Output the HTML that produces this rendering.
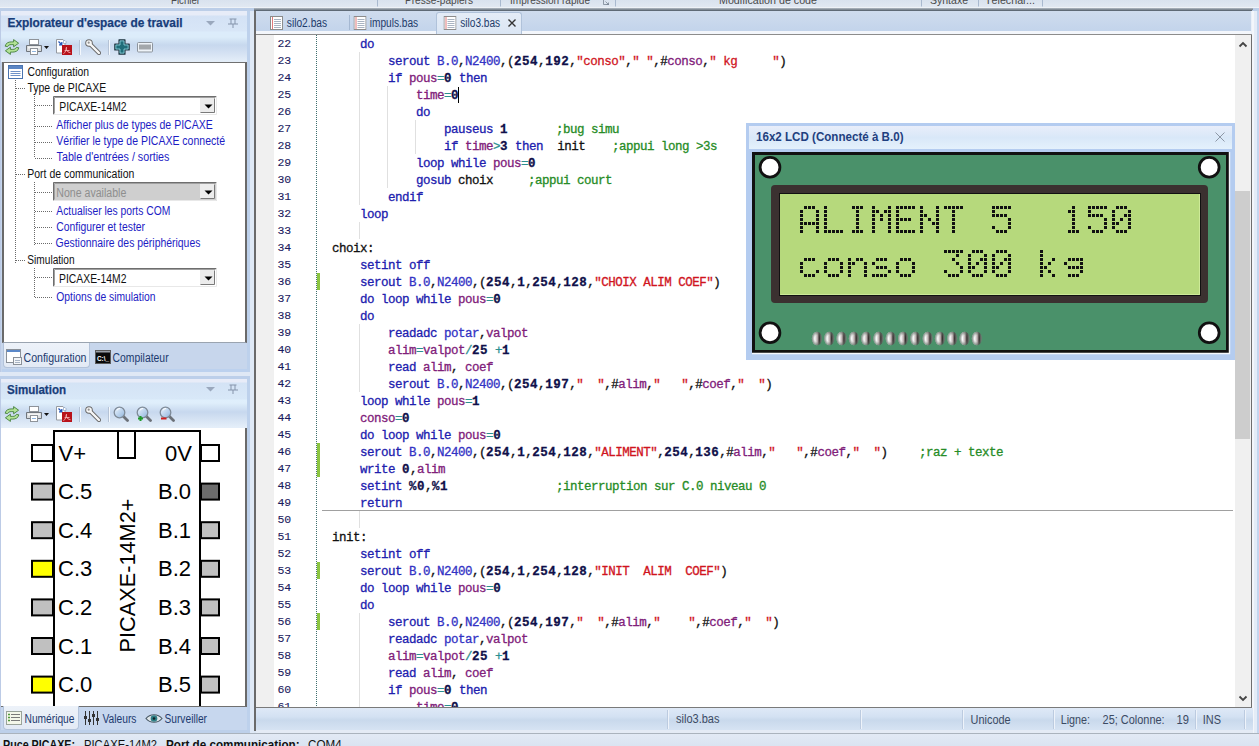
<!DOCTYPE html>
<html><head><meta charset="utf-8">
<style>
html,body{margin:0;padding:0;}
body{width:1259px;height:746px;overflow:hidden;position:relative;background:#dbe6f4;font-family:"Liberation Sans",sans-serif;}
.a{position:absolute;}
#code{position:absolute;left:256px;top:35px;width:979px;height:672px;overflow:hidden;background:#fff;}
.ln{position:absolute;left:0;width:35px;text-align:right;height:17px;line-height:17px;margin-top:-2px;font-family:"Liberation Mono",monospace;font-size:11.5px;letter-spacing:-0.2px;color:#1b1b5e;-webkit-text-stroke:0.1px currentColor;}
.cl{position:absolute;height:17px;line-height:17px;white-space:pre;font-family:"Liberation Mono",monospace;font-size:12.5px;letter-spacing:-0.5px;color:#111;-webkit-text-stroke:0.3px currentColor;}
.cl span{white-space:pre;}
.k{color:#2020ae;}
.p{color:#3333c4;}
.v{color:#80207a;}
.n{color:#10104a;font-weight:bold;letter-spacing:0.5px;}
.s{color:#d0141e;}
.c{color:#268c26;position:absolute;top:0;}
.l{color:#111;}
.o{color:#2a9090;}
svg text{font-family:"Liberation Sans",sans-serif;}
</style></head><body>
<!-- ribbon strip -->
<div class="a" style="left:0;top:0;width:1259px;height:8px;background:linear-gradient(#d9e2ee,#e2e9f2);"></div>
<div class="a" style="left:0;top:7px;width:1259px;height:1px;background:#eef2f7;"></div>
<div class="a" style="left:0;top:8px;width:1259px;height:3px;background:#bcceE8;"></div>
<div class="a" style="left:254px;top:8px;width:999px;height:2px;background:linear-gradient(#b4bcc6,#737d88);"></div>

<svg class="a" style="left:0;top:0" width="1259" height="746" viewBox="0 0 1259 746">
  <g font-size="11" fill="#4a4a4a">
    <text x="171" y="3.7" textLength="29" lengthAdjust="spacingAndGlyphs">Fichier</text>
    <text x="405" y="3.7" textLength="68" lengthAdjust="spacingAndGlyphs">Presse-papiers</text>
    <text x="510" y="3.7" textLength="80" lengthAdjust="spacingAndGlyphs">Impression rapide</text>
    <text x="719" y="3.7" textLength="98" lengthAdjust="spacingAndGlyphs">Modification de code</text>
    <text x="930" y="3.7" textLength="38" lengthAdjust="spacingAndGlyphs">Syntaxe</text>
    <text x="985" y="3.7" textLength="50" lengthAdjust="spacingAndGlyphs">Téléchar...</text>
  </g>
  <path id="launcher" d="M603.5 0V4.5H609M605.5 1.5l3 3M608.5 2.5v2h-2" stroke="#7a8594" stroke-width=".8" fill="none"/>
  <g stroke="#a9b9cf" stroke-width="1">
    <path d="M377.5 0V6.5M500.5 0V6.5M615.5 0V6.5M921.5 0V6.5M978.5 0V6.5M1042.5 0V6.5"/>
  </g>
</svg>

<!-- right frame strip -->
<div class="a" style="left:1252px;top:11px;width:2px;height:722px;background:#f3f6fb;"></div>
<div class="a" style="left:1254px;top:11px;width:3px;height:722px;background:#e4ecf7;"></div>
<div class="a" style="left:1257px;top:11px;width:2px;height:722px;background:#c3d5ef;"></div>
<!-- LEFT PANEL 1 -->
<div class="a" style="left:0;top:11px;width:250px;height:365px;background:#c6d6ed;"></div>
<div class="a" style="left:0;top:11px;width:1px;height:722px;background:#bccbe6;"></div>
<div class="a" style="left:247px;top:11px;width:3px;height:722px;background:#bdd1ec;"></div>
<div class="a" style="left:250px;top:11px;width:4px;height:722px;background:#dfe9f6;"></div>
<div class="a" style="left:1px;top:11px;width:246px;height:51px;background:linear-gradient(#e7ecf8 0px,#e7ecf8 4px,#d4e2f5 5px,#d8e6f7 20px,#dcecfb 21px,#dcecfa 26px,#c7d8ee 34px,#cddcf0 38px,#e3edf8 50px);"></div>
<div class="a" style="left:2px;top:62px;width:245px;height:281px;box-sizing:border-box;background:#fff;border:1px solid #707070;border-left:2px solid #6a6a6a;border-right:2px solid #6a6a6a;border-bottom:1px solid #9aa4b0;"></div>
<div class="a" style="left:1px;top:343px;width:246px;height:26px;background:#c7d6ec;"></div>
<div class="a" style="left:2px;top:369px;width:245px;height:3px;background:#bcd1ee;"></div>
<div class="a" style="left:0px;top:372px;width:250px;height:4px;background:#dfe8f5;"></div>
<div class="a" style="left:3px;top:343px;width:87px;height:25px;box-sizing:border-box;background:linear-gradient(#edf2f9,#e3eaf5);border:1px solid #b3c3da;border-top:none;border-radius:0 0 4px 4px;"></div>

<!-- LEFT PANEL 2 (simulation) -->
<div class="a" style="left:0;top:376px;width:250px;height:3px;background:#bccfea;"></div>
<div class="a" style="left:0;top:379px;width:1px;height:354px;background:#bccbe6;"></div>
<div class="a" style="left:1px;top:379px;width:246px;height:49px;background:linear-gradient(#e8ecf8 0px,#e8ecf8 3px,#d4e3f5 4px,#d8e8f8 20px,#dfeffc 21px,#dfeefb 24px,#c7d8ee 33px,#cddcf0 36px,#e4eef9 48px);"></div>
<div class="a" style="left:1px;top:428px;width:246px;height:279px;box-sizing:border-box;background:#fff;border-right:2px solid #6a6a6a;border-bottom:1px solid #707070;"></div>
<div class="a" style="left:1px;top:707px;width:246px;height:23px;background:#c7d7ee;"></div>
<div class="a" style="left:0;top:730px;width:250px;height:3px;background:#bdd0ea;"></div>
<div class="a" style="left:3px;top:706px;width:76px;height:24px;box-sizing:border-box;background:linear-gradient(#edf2f9,#e3eaf5);border:1px solid #b3c3da;border-top:none;border-radius:0 0 4px 4px;"></div>

<svg class="a" style="left:0;top:0" width="260" height="746" viewBox="0 0 260 746">
  <defs>
    <linearGradient id="gGreen" x1="0" y1="0" x2="0" y2="1"><stop offset="0" stop-color="#a6dc8a"/><stop offset="1" stop-color="#4fa53c"/></linearGradient>
    <linearGradient id="gMag" x1="0" y1="0" x2="1" y2="1"><stop offset="0" stop-color="#eef6ff"/><stop offset="1" stop-color="#8fb4dc"/></linearGradient>
    <symbol id="icRefresh" viewBox="0 0 16 16">
      <path d="M1.2 7.2C1.6 4.3 4.3 2.9 7.2 2.9H9.6V.6l5 3.6-5 3.6V5.6H7.2C5.5 5.6 4.2 6.2 3.6 7.6z" fill="#b3e396" stroke="#44803a" stroke-width=".9" stroke-linejoin="round"/>
      <path d="M14.8 8.8c-.4 2.9-3.1 4.3-6 4.3H6.4v2.3l-5-3.6 5-3.6v2.2h2.4c1.7 0 3-.6 3.6-2z" fill="#b3e396" stroke="#44803a" stroke-width=".9" stroke-linejoin="round"/>
    </symbol>
    <symbol id="icPrint" viewBox="0 0 16 16">
      <rect x="3.5" y=".5" width="9" height="5" fill="#fff" stroke="#8e9399"/>
      <path d="M.5 6.5h15v6h-15z" fill="#d9dcdf" stroke="#6f757c"/>
      <rect x="2" y="7.5" width="12" height="2" fill="#f4f4f4"/>
      <rect x="4.5" y="9.5" width="7" height="6" fill="#fff" stroke="#8e9399"/>
      <path d="M6 12.5h4" stroke="#8fb6e0"/>
    </symbol>
    <symbol id="icPdf" viewBox="0 0 16 16">
      <path d="M.5 .5h6.5l2 2v11.5H.5z" fill="#fff" stroke="#959aa1"/>
      <path d="M2.5 2.5l3 3M5.8 3v2.8H3" stroke="#2456b8" stroke-width="1.3" fill="none"/>
      <path d="M7.5 1.5h1.5l1 1v2h-2.5z" fill="#fff" stroke="#8aa0c0" stroke-width=".7"/>
      <rect x="6" y="6" width="10" height="10" fill="#b8121a"/>
      <path d="M7.5 14.8c1.8-1.6 3.2-4.2 3-6.6-.9 1.6-.2 4.8 4 5.5M8.6 11.5h5" stroke="#f3b0b0" stroke-width=".9" fill="none"/>
    </symbol>
    <symbol id="icWrench" viewBox="0 0 16 16">
      <path d="M4 4L14 14" stroke="#6a6a6a" stroke-width="4.2" stroke-linecap="round"/>
      <circle cx="4" cy="4" r="3.8" fill="#6a6a6a"/>
      <path d="M4 4L14 14" stroke="#f7f7f7" stroke-width="2.4" stroke-linecap="round"/>
      <circle cx="4" cy="4" r="2.8" fill="#f7f7f7"/>
      <circle cx="3.7" cy="3.7" r="1.1" fill="#909090"/>
    </symbol>
    <symbol id="icPlus" viewBox="0 0 16 16">
      <path d="M5 .8h6v4.2h4.2v6H11v4.2H5V11H.8V5H5z" fill="#1f6d79" stroke="#2a3c48" stroke-width="1.2" stroke-linejoin="round"/>
      <path d="M6 1.9h4v4.1h4.1v4H10v4.1H6V10H1.9V6H6z" fill="none" stroke="#9fe3ee" stroke-width=".7"/>
    </symbol>
    <symbol id="icMinus" viewBox="0 0 16 16">
      <rect x=".5" y="3.5" width="15" height="9.5" rx="1" fill="#eef3f8" stroke="#8d949c"/>
      <rect x="2" y="5.5" width="12" height="5" fill="#a3a7ab"/>
    </symbol>
    <symbol id="icMag" viewBox="0 0 16 16">
      <path d="M10 10l4.5 4.5" stroke="#6c7178" stroke-width="2.8" stroke-linecap="round"/>
      <circle cx="6.5" cy="6.5" r="5.3" fill="url(#gMag)" stroke="#7f8b98" stroke-width="1.3"/>
      <path d="M4 4.5a3 3 0 0 1 3-2" stroke="#fff" stroke-width="1" fill="none"/>
    </symbol>
  </defs>

  <!-- panel 1 header -->
  <text x="7.5" y="26.8" font-size="12" font-weight="bold" fill="#183d7a" stroke="#183d7a" stroke-width=".25" textLength="175" lengthAdjust="spacingAndGlyphs">Explorateur d'espace de travail</text>
  <path d="M206 21h9l-4.5 4.5z" fill="#9aa8bd"/>
  <path d="M229.5 19h7M231 19v5M235 19v5M228 24h10M233 24v4" stroke="#8594ab" stroke-width="1" fill="none"/>

  <!-- toolbar 1 -->
  <use href="#icRefresh" x="4" y="39" width="16" height="16"/>
  <use href="#icPrint" x="26" y="39" width="16" height="16"/>
  <path d="M44 46h5l-2.5 3z" fill="#111"/>
  <use href="#icPdf" x="56" y="39" width="16" height="16"/>
  <path d="M79.5 40v15" stroke="#b5c3d6"/><path d="M80.5 40v15" stroke="#f4f8fd"/>
  <use href="#icWrench" x="85" y="39" width="16" height="16"/>
  <path d="M108.5 40v15" stroke="#b5c3d6"/><path d="M109.5 40v15" stroke="#f4f8fd"/>
  <use href="#icPlus" x="114" y="39" width="16" height="16"/>
  <use href="#icMinus" x="137" y="39" width="16" height="16"/>

  <!-- tree -->
  <g fill="none" stroke="#6a6a6a" stroke-width="1" stroke-dasharray="1 1">
    <path d="M15.5 80V264M16 88.5H25M16 174.5H25M16 260.5H25"/>
    <path d="M34.5 96V158M35 105.5H52M35 126.5H53M35 142.5H53M35 158.5H53"/>
    <path d="M34.5 182V246M35 192.5H52M35 211.5H53M35 227.5H53M35 243.5H53"/>
    <path d="M34.5 268V297M35 277.5H52M35 297.5H53"/>
  </g>
  <!-- config icon -->
  <rect x="8.5" y="65.5" width="14" height="13" fill="#fff" stroke="#4a74b0"/>
  <rect x="9" y="66" width="13" height="3" fill="#5b86c4"/>
  <path d="M10.5 71.5h10M10.5 73.5h10M10.5 75.5h10" stroke="#6f92c8"/>

  <g font-size="12" fill="#111">
    <text x="27.4" y="76" textLength="61.7" lengthAdjust="spacingAndGlyphs">Configuration</text>
    <text x="27.4" y="91.5" textLength="79" lengthAdjust="spacingAndGlyphs">Type de PICAXE</text>
    <text x="27.3" y="177.8" textLength="107" lengthAdjust="spacingAndGlyphs">Port de communication</text>
    <text x="27.3" y="263.7" textLength="47.3" lengthAdjust="spacingAndGlyphs">Simulation</text>
  </g>
  <g font-size="12" fill="#1c1cc4">
    <text x="56.3" y="128.7" textLength="156.4" lengthAdjust="spacingAndGlyphs">Afficher plus de types de PICAXE</text>
    <text x="56.3" y="144.8" textLength="168.7" lengthAdjust="spacingAndGlyphs">Vérifier le type de PICAXE connecté</text>
    <text x="56.6" y="160.6" textLength="112.8" lengthAdjust="spacingAndGlyphs">Table d'entrées / sorties</text>
    <text x="56.3" y="215" textLength="114" lengthAdjust="spacingAndGlyphs">Actualiser les ports COM</text>
    <text x="56.3" y="230.5" textLength="88.7" lengthAdjust="spacingAndGlyphs">Configurer et tester</text>
    <text x="55.6" y="246.6" textLength="144.8" lengthAdjust="spacingAndGlyphs">Gestionnaire des périphériques</text>
    <text x="56.3" y="300.9" textLength="99.1" lengthAdjust="spacingAndGlyphs">Options de simulation</text>
  </g>
  <!-- combos -->
  <g>
    <rect x="53" y="96" width="164" height="19" fill="#fff"/>
    <path d="M53.5 114.5V96.5H216.5" stroke="#6e6e6e" stroke-width="1" fill="none"/>
    <path d="M54.5 113.5V97.5H215.5" stroke="#a0a0a0" stroke-width="1" fill="none"/>
    <path d="M53.5 114.5H216.5V96.5" stroke="#e8e8e8" stroke-width="1" fill="none"/>
    <rect x="200" y="98" width="15" height="15" fill="#ececec"/>
    <path d="M200.5 112.5H214.5V98.5" stroke="#7a7a7a" fill="none"/>
    <path d="M204.5 104.5h8l-4 4z" fill="#000"/>
    <text x="59.3" y="110.8" font-size="12" fill="#111" textLength="67.3" lengthAdjust="spacingAndGlyphs">PICAXE-14M2</text>
  </g>
  <g>
    <rect x="53" y="182" width="164" height="19" fill="#cfcfcf"/>
    <path d="M53.5 200.5V182.5H216.5" stroke="#6e6e6e" stroke-width="1" fill="none"/>
    <path d="M54.5 199.5V183.5H215.5" stroke="#a0a0a0" stroke-width="1" fill="none"/>
    <path d="M53.5 200.5H216.5V182.5" stroke="#e8e8e8" stroke-width="1" fill="none"/>
    <rect x="200" y="184" width="15" height="15" fill="#ececec"/>
    <path d="M200.5 198.5H214.5V184.5" stroke="#7a7a7a" fill="none"/>
    <path d="M204.5 190.5h8l-4 4z" fill="#000"/>
    <text x="56.3" y="196.8" font-size="12" fill="#8e8e8e" textLength="70" lengthAdjust="spacingAndGlyphs">None available</text>
  </g>
  <g>
    <rect x="53" y="268" width="164" height="19" fill="#fff"/>
    <path d="M53.5 286.5V268.5H216.5" stroke="#6e6e6e" stroke-width="1" fill="none"/>
    <path d="M54.5 285.5V269.5H215.5" stroke="#a0a0a0" stroke-width="1" fill="none"/>
    <path d="M53.5 286.5H216.5V268.5" stroke="#e8e8e8" stroke-width="1" fill="none"/>
    <rect x="200" y="270" width="15" height="15" fill="#ececec"/>
    <path d="M200.5 284.5H214.5V270.5" stroke="#7a7a7a" fill="none"/>
    <path d="M204.5 276.5h8l-4 4z" fill="#000"/>
    <text x="59.1" y="282.6" font-size="12" fill="#111" textLength="67.3" lengthAdjust="spacingAndGlyphs">PICAXE-14M2</text>
  </g>

  <!-- tabs panel1 -->
  <rect x="6.5" y="349.5" width="14" height="13" fill="#fff" stroke="#8a9098"/>
  <rect x="7" y="350" width="13" height="2" fill="#5b88c8"/>
  <rect x="13.5" y="357.5" width="8" height="7" fill="#f4f6f9" stroke="#8a9098"/>
  <path d="M15 360.5h5M15 362.5h5" stroke="#a8b4c4"/>
  <text x="23.5" y="361.5" font-size="12" fill="#1d3a6e" textLength="63" lengthAdjust="spacingAndGlyphs">Configuration</text>
  <rect x="95.5" y="350.5" width="15" height="13" fill="#0a0a0a" stroke="#5a5a5a"/>
  <rect x="96" y="351" width="14" height="1.5" fill="#9aa0a8"/>
  <text x="97" y="361" font-size="6.5" font-weight="bold" fill="#fff" font-family="Liberation Mono" textLength="12" lengthAdjust="spacingAndGlyphs">C:\_</text>
  <text x="112.6" y="361.5" font-size="12" fill="#1d3a6e" textLength="56" lengthAdjust="spacingAndGlyphs">Compilateur</text>
</svg>

<svg class="a" style="left:0;top:0" width="260" height="746" viewBox="0 0 260 746">
  <!-- panel 2 header -->
  <text x="7" y="394.2" font-size="12" font-weight="bold" fill="#183d7a" stroke="#183d7a" stroke-width=".25" textLength="59" lengthAdjust="spacingAndGlyphs">Simulation</text>
  <path d="M206 387h9l-4.5 4.5z" fill="#9aa8bd"/>
  <path d="M229.5 385h7M231 385v5M235 385v5M228 390h10M233 390v4" stroke="#8594ab" stroke-width="1" fill="none"/>
  <!-- toolbar 2 -->
  <use href="#icRefresh" x="4" y="406" width="16" height="16"/>
  <use href="#icPrint" x="26" y="406" width="16" height="16"/>
  <path d="M44 413h5l-2.5 3z" fill="#111"/>
  <use href="#icPdf" x="56" y="406" width="16" height="16"/>
  <path d="M79.5 407v15" stroke="#b5c3d6"/><path d="M80.5 407v15" stroke="#f4f8fd"/>
  <use href="#icWrench" x="85" y="406" width="16" height="16"/>
  <path d="M108.5 407v15" stroke="#b5c3d6"/><path d="M109.5 407v15" stroke="#f4f8fd"/>
  <use href="#icMag" x="113" y="406" width="16" height="16"/>
  <use href="#icMag" x="136" y="406" width="16" height="16"/>
  <path d="M138 418.5h5M140.5 416v5" stroke="#1f9a2a" stroke-width="2"/>
  <use href="#icMag" x="159" y="406" width="16" height="16"/>
  <path d="M161 418.5h5.5" stroke="#d02020" stroke-width="2"/>

  <!-- chip -->
  <g stroke="#000" stroke-width="2">
    <path d="M54 706V431H200V706" fill="#fff"/>
    <path d="M118 432V458H135V432" fill="#fff"/>
  </g>
  <g stroke="#000" stroke-width="2">
    <rect x="32" y="445" width="21" height="16" fill="#fff"/>
    <rect x="32" y="483.6" width="21" height="16" fill="#c0c0c0"/>
    <rect x="32" y="522.2" width="21" height="16" fill="#c0c0c0"/>
    <rect x="32" y="560.8" width="21" height="16" fill="#ffff00"/>
    <rect x="32" y="599.4" width="21" height="16" fill="#c0c0c0"/>
    <rect x="32" y="638" width="21" height="16" fill="#c0c0c0"/>
    <rect x="32" y="676.6" width="21" height="16" fill="#ffff00"/>
    <rect x="201" y="445" width="18" height="16" fill="#fff"/>
    <rect x="201" y="483.6" width="18" height="16" fill="#6c6c6c"/>
    <rect x="201" y="522.2" width="18" height="16" fill="#c0c0c0"/>
    <rect x="201" y="560.8" width="18" height="16" fill="#c0c0c0"/>
    <rect x="201" y="599.4" width="18" height="16" fill="#c0c0c0"/>
    <rect x="201" y="638" width="18" height="16" fill="#c0c0c0"/>
    <rect x="201" y="676.6" width="18" height="16" fill="#c0c0c0"/>
  </g>
  <g font-size="22" fill="#000">
    <text x="58.5" y="460.6">V+</text>
    <text x="58" y="499.2">C.5</text>
    <text x="58" y="537.8">C.4</text>
    <text x="58" y="576.4">C.3</text>
    <text x="58" y="615">C.2</text>
    <text x="58" y="653.6">C.1</text>
    <text x="58" y="692.2">C.0</text>
  </g>
  <g font-size="22" fill="#000" text-anchor="end">
    <text x="192" y="460.6">0V</text>
    <text x="191" y="499.2">B.0</text>
    <text x="191" y="537.8">B.1</text>
    <text x="191" y="576.4">B.2</text>
    <text x="191" y="615">B.3</text>
    <text x="191" y="653.6">B.4</text>
    <text x="191" y="692.2">B.5</text>
  </g>
  <text transform="translate(135.2,652.5) rotate(-90)" font-size="22" fill="#000" textLength="154" lengthAdjust="spacingAndGlyphs">PICAXE-14M2+</text>

  <!-- tabs panel 2 -->
  <rect x="6.5" y="711.5" width="15" height="13" fill="#f4f7ea" stroke="#9aa39a"/>
  <path d="M8 714.5h2M8 717.5h2M8 720.5h2" stroke="#4f9a3a" stroke-width="1.5"/>
  <path d="M11 714.5h9M11 717.5h9M11 720.5h9" stroke="#7a7a7a"/>
  <text x="24.5" y="723.3" font-size="12" fill="#1d3a6e" textLength="50" lengthAdjust="spacingAndGlyphs">Numérique</text>
  <g stroke="#333" stroke-width="1">
    <path d="M85.5 711v14M89.5 711v14M93.5 711v14M97.5 711v14"/>
  </g>
  <g fill="#333"><rect x="84" y="716" width="3" height="3"/><rect x="88" y="719" width="3" height="3"/><rect x="92" y="714" width="3" height="3"/><rect x="96" y="718" width="3" height="3"/></g>
  <text x="102.5" y="723.3" font-size="12" fill="#1d3a6e" textLength="34" lengthAdjust="spacingAndGlyphs">Valeurs</text>
  <path d="M146 718.5c4-5 12-5 16 0c-4 5-12 5-16 0z" fill="#dfe6ea" stroke="#4a5a66" stroke-width="1.2"/>
  <circle cx="154" cy="718.5" r="3.3" fill="#2f7e86"/>
  <circle cx="154" cy="718.5" r="1.3" fill="#102428"/>
  <text x="164.5" y="723.3" font-size="12" fill="#1d3a6e" textLength="42.5" lengthAdjust="spacingAndGlyphs">Surveiller</text>
</svg>

<!-- EDITOR -->
<div class="a" style="left:254px;top:10px;width:998px;height:698px;box-sizing:border-box;border:1px solid #6e6e6e;border-top-color:#5f6a76;border-left:2px solid #6a6a6a;border-bottom:none;background:#c7d7ec;"></div>
<div class="a" style="left:254px;top:708px;width:2px;height:23px;background:#6a6a6a;"></div>
<div class="a" style="left:256px;top:11px;width:996px;height:20px;background:linear-gradient(#cfdcee,#c3d4eb);"></div>
<div class="a" style="left:256px;top:31px;width:996px;height:3px;background:#f3f6fb;"></div>
<div class="a" style="left:256px;top:34px;width:996px;height:1px;background:#8c8c8c;"></div>
<div class="a" style="left:436px;top:12px;width:84px;height:21px;background:linear-gradient(#e4ecf7,#dbe6f4);border:1px solid #b0c2da;border-bottom:none;border-radius:3px 3px 0 0;"></div>

<div class="a" id="tabstrip-right-fix" style="left:1251px;top:11px;width:1px;height:23px;background:#e9f0f8;"></div>
<div id="code">
  <div class="a" style="left:0;top:0;width:18px;height:672px;background:#f0f0f0;"></div>
<div class="ln" style="top:2px">22</div>
<div class="cl" style="top:2px;left:104px"><span class="k">do</span></div>
<div class="ln" style="top:19px">23</div>
<div class="cl" style="top:19px;left:132px"><span class="k">serout</span> <span class="p">B.0</span>,<span class="p">N2400</span>,(<span class="n">254</span>,<span class="n">192</span>,<span class="s">&quot;conso&quot;</span>,<span class="s">&quot; &quot;</span>,#<span class="v">conso</span>,<span class="s">&quot; kg     &quot;</span>)</div>
<div class="ln" style="top:36px">24</div>
<div class="cl" style="top:36px;left:132px"><span class="k">if</span> <span class="v">pous</span><span class="o">=</span><span class="n">0</span> <span class="k">then</span></div>
<div class="ln" style="top:53px">25</div>
<div class="cl" style="top:53px;left:160px"><span class="v">time</span><span class="o">=</span><span class="n">0</span></div>
<div class="ln" style="top:70px">26</div>
<div class="cl" style="top:70px;left:160px"><span class="k">do</span></div>
<div class="ln" style="top:87px">27</div>
<div class="cl" style="top:87px;left:188px"><span class="k">pauseus</span> <span class="n">1</span><span class="c" style="left:112px">;bug simu</span></div>
<div class="ln" style="top:104px">28</div>
<div class="cl" style="top:104px;left:188px"><span class="k">if</span> <span class="v">time</span><span class="o">&gt;</span><span class="n">3</span> <span class="k">then</span>  <span class="l">init</span><span class="c" style="left:168px">;appui long &gt;3s</span></div>
<div class="ln" style="top:121px">29</div>
<div class="cl" style="top:121px;left:160px"><span class="k">loop</span> <span class="k">while</span> <span class="v">pous</span><span class="o">=</span><span class="n">0</span></div>
<div class="ln" style="top:138px">30</div>
<div class="cl" style="top:138px;left:160px"><span class="k">gosub</span> <span class="l">choix</span><span class="c" style="left:112px">;appui court</span></div>
<div class="ln" style="top:155px">31</div>
<div class="cl" style="top:155px;left:132px"><span class="k">endif</span></div>
<div class="ln" style="top:172px">32</div>
<div class="cl" style="top:172px;left:104px"><span class="k">loop</span></div>
<div class="ln" style="top:189px">33</div>
<div class="ln" style="top:206px">34</div>
<div class="cl" style="top:206px;left:76px"><span class="l">choix:</span></div>
<div class="ln" style="top:223px">35</div>
<div class="cl" style="top:223px;left:104px"><span class="k">setint</span> <span class="k">off</span></div>
<div class="ln" style="top:240px">36</div>
<div class="cl" style="top:240px;left:104px"><span class="k">serout</span> <span class="p">B.0</span>,<span class="p">N2400</span>,(<span class="n">254</span>,<span class="n">1</span>,<span class="n">254</span>,<span class="n">128</span>,<span class="s">&quot;CHOIX ALIM COEF&quot;</span>)</div>
<div class="ln" style="top:257px">37</div>
<div class="cl" style="top:257px;left:104px"><span class="k">do</span> <span class="k">loop</span> <span class="k">while</span> <span class="v">pous</span><span class="o">=</span><span class="n">0</span></div>
<div class="ln" style="top:274px">38</div>
<div class="cl" style="top:274px;left:104px"><span class="k">do</span></div>
<div class="ln" style="top:291px">39</div>
<div class="cl" style="top:291px;left:132px"><span class="k">readadc</span> <span class="p">potar</span>,<span class="v">valpot</span></div>
<div class="ln" style="top:308px">40</div>
<div class="cl" style="top:308px;left:132px"><span class="v">alim</span><span class="o">=</span><span class="v">valpot</span><span class="o">/</span><span class="n">25</span> <span class="o">+</span><span class="n">1</span></div>
<div class="ln" style="top:325px">41</div>
<div class="cl" style="top:325px;left:132px"><span class="k">read</span> <span class="v">alim</span>, <span class="v">coef</span></div>
<div class="ln" style="top:342px">42</div>
<div class="cl" style="top:342px;left:132px"><span class="k">serout</span> <span class="p">B.0</span>,<span class="p">N2400</span>,(<span class="n">254</span>,<span class="n">197</span>,<span class="s">&quot;  &quot;</span>,#<span class="v">alim</span>,<span class="s">&quot;   &quot;</span>,#<span class="v">coef</span>,<span class="s">&quot;  &quot;</span>)</div>
<div class="ln" style="top:359px">43</div>
<div class="cl" style="top:359px;left:104px"><span class="k">loop</span> <span class="k">while</span> <span class="v">pous</span><span class="o">=</span><span class="n">1</span></div>
<div class="ln" style="top:376px">44</div>
<div class="cl" style="top:376px;left:104px"><span class="v">conso</span><span class="o">=</span><span class="n">0</span></div>
<div class="ln" style="top:393px">45</div>
<div class="cl" style="top:393px;left:104px"><span class="k">do</span> <span class="k">loop</span> <span class="k">while</span> <span class="v">pous</span><span class="o">=</span><span class="n">0</span></div>
<div class="ln" style="top:410px">46</div>
<div class="cl" style="top:410px;left:104px"><span class="k">serout</span> <span class="p">B.0</span>,<span class="p">N2400</span>,(<span class="n">254</span>,<span class="n">1</span>,<span class="n">254</span>,<span class="n">128</span>,<span class="s">&quot;ALIMENT&quot;</span>,<span class="n">254</span>,<span class="n">136</span>,#<span class="v">alim</span>,<span class="s">&quot;   &quot;</span>,#<span class="v">coef</span>,<span class="s">&quot;  &quot;</span>)<span class="c" style="left:559px">;raz + texte</span></div>
<div class="ln" style="top:427px">47</div>
<div class="cl" style="top:427px;left:104px"><span class="k">write</span> <span class="n">0</span>,<span class="v">alim</span></div>
<div class="ln" style="top:444px">48</div>
<div class="cl" style="top:444px;left:104px"><span class="k">setint</span> <span class="n">%0</span>,<span class="n">%1</span><span class="c" style="left:196px">;interruption sur C.0 niveau 0</span></div>
<div class="ln" style="top:461px">49</div>
<div class="cl" style="top:461px;left:104px"><span class="k">return</span></div>
<div class="ln" style="top:478px">50</div>
<div class="ln" style="top:495px">51</div>
<div class="cl" style="top:495px;left:76px"><span class="l">init:</span></div>
<div class="ln" style="top:512px">52</div>
<div class="cl" style="top:512px;left:104px"><span class="k">setint</span> <span class="k">off</span></div>
<div class="ln" style="top:529px">53</div>
<div class="cl" style="top:529px;left:104px"><span class="k">serout</span> <span class="p">B.0</span>,<span class="p">N2400</span>,(<span class="n">254</span>,<span class="n">1</span>,<span class="n">254</span>,<span class="n">128</span>,<span class="s">&quot;INIT  ALIM  COEF&quot;</span>)</div>
<div class="ln" style="top:546px">54</div>
<div class="cl" style="top:546px;left:104px"><span class="k">do</span> <span class="k">loop</span> <span class="k">while</span> <span class="v">pous</span><span class="o">=</span><span class="n">0</span></div>
<div class="ln" style="top:563px">55</div>
<div class="cl" style="top:563px;left:104px"><span class="k">do</span></div>
<div class="ln" style="top:580px">56</div>
<div class="cl" style="top:580px;left:132px"><span class="k">serout</span> <span class="p">B.0</span>,<span class="p">N2400</span>,(<span class="n">254</span>,<span class="n">197</span>,<span class="s">&quot;  &quot;</span>,#<span class="v">alim</span>,<span class="s">&quot;    &quot;</span>,#<span class="v">coef</span>,<span class="s">&quot;  &quot;</span>)</div>
<div class="ln" style="top:597px">57</div>
<div class="cl" style="top:597px;left:132px"><span class="k">readadc</span> <span class="p">potar</span>,<span class="v">valpot</span></div>
<div class="ln" style="top:614px">58</div>
<div class="cl" style="top:614px;left:132px"><span class="v">alim</span><span class="o">=</span><span class="v">valpot</span><span class="o">/</span><span class="n">25</span> <span class="o">+</span><span class="n">1</span></div>
<div class="ln" style="top:631px">59</div>
<div class="cl" style="top:631px;left:132px"><span class="k">read</span> <span class="v">alim</span>, <span class="v">coef</span></div>
<div class="ln" style="top:648px">60</div>
<div class="cl" style="top:648px;left:132px"><span class="k">if</span> <span class="v">pous</span><span class="o">=</span><span class="n">0</span> <span class="k">then</span></div>
<div class="ln" style="top:665px">61</div>
<div class="cl" style="top:665px;left:160px"><span class="v">time</span><span class="o">=</span><span class="n">0</span></div>
</div>

<!-- editor status bar -->
<div class="a" style="left:256px;top:707px;width:996px;height:1px;background:#7a7a7a;"></div>
<div class="a" style="left:256px;top:708px;width:997px;height:22px;background:linear-gradient(#dfe9f7,#d3e1f2 40%,#c9d9ec 55%,#d6e3f3);"></div>
<div class="a" style="left:256px;top:730px;width:997px;height:3px;background:#e4ebf5;"></div>

<!-- main status bar -->
<div class="a" style="left:0;top:733px;width:1259px;height:13px;box-sizing:border-box;border-top:1px solid #aab3bd;background:linear-gradient(#e2eaf5,#dae4f1);"></div>

<svg class="a" style="left:0;top:0" width="1259" height="746" viewBox="0 0 1259 746">
  <defs>
    <symbol id="icDoc" viewBox="0 0 13 14">
      <rect x=".5" y=".5" width="12" height="13" fill="#fff" stroke="#8c8c8c"/>
      <path d="M2.5 1v12" stroke="#e07a7a"/>
      <path d="M4 3.5h7M4 5.5h7M4 7.5h7M4 9.5h7M4 11.5h7" stroke="#a9b4c2"/>
    </symbol>
  </defs>
  <!-- tabs -->
  <path d="M349.5 15v15" stroke="#a5b8d2"/>
  <use href="#icDoc" x="270" y="16" width="13" height="14"/>
  <text x="286.8" y="26.8" font-size="12" fill="#1e3b6a" textLength="40.3" lengthAdjust="spacingAndGlyphs">silo2.bas</text>
  <use href="#icDoc" x="353.5" y="16" width="13" height="14"/>
  <text x="369.7" y="26.8" font-size="12" fill="#1e3b6a" textLength="48.5" lengthAdjust="spacingAndGlyphs">impuls.bas</text>
  <use href="#icDoc" x="443.5" y="16" width="13" height="14"/>
  <text x="460.2" y="26.8" font-size="12" fill="#1e3b6a" textLength="40" lengthAdjust="spacingAndGlyphs">silo3.bas</text>
  <path d="M508.5 19.5l7 7M515.5 19.5l-7 7" stroke="#333" stroke-width="1.4"/>

  <!-- scrollbar -->
  <rect x="1235" y="35" width="16" height="672" fill="#f0f0f0"/>
  <rect x="1235" y="191" width="15" height="248" fill="#cdcdcd"/>
  <path d="M1239.5 46.5l3.5-3.5 3.5 3.5" stroke="#444" stroke-width="1.8" fill="none"/>
  <path d="M1239.5 696.5l3.5 3.5 3.5-3.5" stroke="#444" stroke-width="1.8" fill="none"/>

  <!-- gutter dotted + markers -->
  <path d="M316.5 35V707" stroke="#3f6f6f" stroke-width="1" stroke-dasharray="1 1"/>
  <g fill="#8cc541">
    <rect x="317" y="273" width="3" height="17"/>
    <rect x="317" y="443" width="3" height="34"/>
    <rect x="317" y="562" width="3" height="17"/>
    <rect x="317" y="613" width="3" height="17"/>
  </g>
  <!-- indent guides -->
  <g stroke="#e0e0e0" stroke-width="1">
    <path d="M359.5 52V205M359.5 222V239M359.5 324V392M359.5 511V528M359.5 613V707M387.5 86V188M415.5 120V154"/>
  </g>
  <path d="M322 510.5H1233" stroke="#a0a0a0"/>

  <!-- editor status bar -->
  <g stroke="#bccbe0"><path d="M667.5 710v19M860.5 710v19M962.5 710v19M1053.5 710v19M1195.5 710v19M1244.5 710v19"/></g>
  <g stroke="#eef3fa"><path d="M668.5 710v19M861.5 710v19M963.5 710v19M1054.5 710v19M1196.5 710v19M1245.5 710v19"/></g>
  <g font-size="12" fill="#3b4a63">
    <text x="676" y="722.8" textLength="43.5" lengthAdjust="spacingAndGlyphs">silo3.bas</text>
    <text x="970.6" y="723.8" textLength="40" lengthAdjust="spacingAndGlyphs">Unicode</text>
    <text x="1060.7" y="723.8" textLength="29.3" lengthAdjust="spacingAndGlyphs">Ligne:</text>
    <text x="1102.6" y="723.8" textLength="62" lengthAdjust="spacingAndGlyphs">25; Colonne:</text>
    <text x="1176.6" y="723.8" textLength="12.4" lengthAdjust="spacingAndGlyphs">19</text>
    <text x="1202.8" y="723.8" textLength="18.2" lengthAdjust="spacingAndGlyphs">INS</text>
  </g>

  <!-- main status bar -->
  <g font-size="12" fill="#111">
    <text x="3" y="749" font-weight="bold" textLength="72" lengthAdjust="spacingAndGlyphs">Puce PICAXE:</text>
    <text x="84" y="749" textLength="73" lengthAdjust="spacingAndGlyphs">PICAXE-14M2</text>
    <text x="166" y="749" font-weight="bold" textLength="133.6" lengthAdjust="spacingAndGlyphs">Port de communication:</text>
    <text x="308" y="749" textLength="33.6" lengthAdjust="spacingAndGlyphs">COM4</text>
  </g>
</svg>

<div class="a" id="cursor" style="left:458px;top:87px;width:1px;height:16px;background:#000;"></div>
<!-- LCD -->
<svg class="a" style="left:0;top:0" width="1259" height="746" viewBox="0 0 1259 746">
  <rect x="746" y="123" width="489" height="237" fill="#b4ccf0"/>
  <defs><linearGradient id="gTitle" x1="0" y1="0" x2="0" y2="1"><stop offset="0" stop-color="#e9eefa"/><stop offset=".5" stop-color="#d9e8f8"/><stop offset="1" stop-color="#e4f1fc"/></linearGradient></defs><rect x="749" y="126" width="483" height="23" fill="url(#gTitle)"/>
  <text x="756" y="141" font-size="12" font-weight="bold" fill="#1f3f7f" textLength="147.5" lengthAdjust="spacingAndGlyphs">16x2 LCD (Connecté à B.0)</text>
  <path d="M1215.5 132.5l9 9M1224.5 132.5l-9 9" stroke="#8d97a6" stroke-width="1"/>
  <rect x="753.5" y="153.5" width="474" height="198" fill="#4a916a" stroke="#111" stroke-width="3"/>
  <path d="M752 353.5H1229.5V152" stroke="#f4f8fd" stroke-width="1.4" fill="none"/>
  <rect x="771" y="185" width="437" height="118" rx="4" fill="#3b3130"/>
  <rect x="779" y="193" width="422" height="103" fill="#111"/><rect x="780" y="194" width="420" height="101" fill="#b6d97c"/><path d="M780.5 294.5H1199.5V194" stroke="#cdea98" stroke-width="1" fill="none"/>
  <path fill="#111" d="M804 206h3v3h-3zM808 206h3v3h-3zM812 206h3v3h-3zM800 210h3v3h-3zM816 210h3v3h-3zM800 214h3v3h-3zM816 214h3v3h-3zM800 218h3v3h-3zM816 218h3v3h-3zM800 222h3v3h-3zM804 222h3v3h-3zM808 222h3v3h-3zM812 222h3v3h-3zM816 222h3v3h-3zM800 226h3v3h-3zM816 226h3v3h-3zM800 230h3v3h-3zM816 230h3v3h-3zM824 206h3v3h-3zM824 210h3v3h-3zM824 214h3v3h-3zM824 218h3v3h-3zM824 222h3v3h-3zM824 226h3v3h-3zM824 230h3v3h-3zM828 230h3v3h-3zM832 230h3v3h-3zM836 230h3v3h-3zM840 230h3v3h-3zM852 206h3v3h-3zM856 206h3v3h-3zM860 206h3v3h-3zM856 210h3v3h-3zM856 214h3v3h-3zM856 218h3v3h-3zM856 222h3v3h-3zM856 226h3v3h-3zM852 230h3v3h-3zM856 230h3v3h-3zM860 230h3v3h-3zM872 206h3v3h-3zM888 206h3v3h-3zM872 210h3v3h-3zM876 210h3v3h-3zM884 210h3v3h-3zM888 210h3v3h-3zM872 214h3v3h-3zM880 214h3v3h-3zM888 214h3v3h-3zM872 218h3v3h-3zM880 218h3v3h-3zM888 218h3v3h-3zM872 222h3v3h-3zM888 222h3v3h-3zM872 226h3v3h-3zM888 226h3v3h-3zM872 230h3v3h-3zM888 230h3v3h-3zM896 206h3v3h-3zM900 206h3v3h-3zM904 206h3v3h-3zM908 206h3v3h-3zM912 206h3v3h-3zM896 210h3v3h-3zM896 214h3v3h-3zM896 218h3v3h-3zM900 218h3v3h-3zM904 218h3v3h-3zM908 218h3v3h-3zM896 222h3v3h-3zM896 226h3v3h-3zM896 230h3v3h-3zM900 230h3v3h-3zM904 230h3v3h-3zM908 230h3v3h-3zM912 230h3v3h-3zM920 206h3v3h-3zM936 206h3v3h-3zM920 210h3v3h-3zM936 210h3v3h-3zM920 214h3v3h-3zM924 214h3v3h-3zM936 214h3v3h-3zM920 218h3v3h-3zM928 218h3v3h-3zM936 218h3v3h-3zM920 222h3v3h-3zM932 222h3v3h-3zM936 222h3v3h-3zM920 226h3v3h-3zM936 226h3v3h-3zM920 230h3v3h-3zM936 230h3v3h-3zM944 206h3v3h-3zM948 206h3v3h-3zM952 206h3v3h-3zM956 206h3v3h-3zM960 206h3v3h-3zM952 210h3v3h-3zM952 214h3v3h-3zM952 218h3v3h-3zM952 222h3v3h-3zM952 226h3v3h-3zM952 230h3v3h-3zM992 206h3v3h-3zM996 206h3v3h-3zM1000 206h3v3h-3zM1004 206h3v3h-3zM1008 206h3v3h-3zM992 210h3v3h-3zM992 214h3v3h-3zM996 214h3v3h-3zM1000 214h3v3h-3zM1004 214h3v3h-3zM1008 218h3v3h-3zM1008 222h3v3h-3zM992 226h3v3h-3zM1008 226h3v3h-3zM996 230h3v3h-3zM1000 230h3v3h-3zM1004 230h3v3h-3zM1072 206h3v3h-3zM1068 210h3v3h-3zM1072 210h3v3h-3zM1072 214h3v3h-3zM1072 218h3v3h-3zM1072 222h3v3h-3zM1072 226h3v3h-3zM1068 230h3v3h-3zM1072 230h3v3h-3zM1076 230h3v3h-3zM1088 206h3v3h-3zM1092 206h3v3h-3zM1096 206h3v3h-3zM1100 206h3v3h-3zM1104 206h3v3h-3zM1088 210h3v3h-3zM1088 214h3v3h-3zM1092 214h3v3h-3zM1096 214h3v3h-3zM1100 214h3v3h-3zM1104 218h3v3h-3zM1104 222h3v3h-3zM1088 226h3v3h-3zM1104 226h3v3h-3zM1092 230h3v3h-3zM1096 230h3v3h-3zM1100 230h3v3h-3zM1116 206h3v3h-3zM1120 206h3v3h-3zM1124 206h3v3h-3zM1112 210h3v3h-3zM1128 210h3v3h-3zM1112 214h3v3h-3zM1124 214h3v3h-3zM1128 214h3v3h-3zM1112 218h3v3h-3zM1120 218h3v3h-3zM1128 218h3v3h-3zM1112 222h3v3h-3zM1116 222h3v3h-3zM1128 222h3v3h-3zM1112 226h3v3h-3zM1128 226h3v3h-3zM1116 230h3v3h-3zM1120 230h3v3h-3zM1124 230h3v3h-3zM804 258h3v3h-3zM808 258h3v3h-3zM812 258h3v3h-3zM800 262h3v3h-3zM800 266h3v3h-3zM800 270h3v3h-3zM816 270h3v3h-3zM804 274h3v3h-3zM808 274h3v3h-3zM812 274h3v3h-3zM828 258h3v3h-3zM832 258h3v3h-3zM836 258h3v3h-3zM824 262h3v3h-3zM840 262h3v3h-3zM824 266h3v3h-3zM840 266h3v3h-3zM824 270h3v3h-3zM840 270h3v3h-3zM828 274h3v3h-3zM832 274h3v3h-3zM836 274h3v3h-3zM848 258h3v3h-3zM856 258h3v3h-3zM860 258h3v3h-3zM848 262h3v3h-3zM852 262h3v3h-3zM864 262h3v3h-3zM848 266h3v3h-3zM864 266h3v3h-3zM848 270h3v3h-3zM864 270h3v3h-3zM848 274h3v3h-3zM864 274h3v3h-3zM876 258h3v3h-3zM880 258h3v3h-3zM884 258h3v3h-3zM872 262h3v3h-3zM876 266h3v3h-3zM880 266h3v3h-3zM884 266h3v3h-3zM888 270h3v3h-3zM872 274h3v3h-3zM876 274h3v3h-3zM880 274h3v3h-3zM884 274h3v3h-3zM900 258h3v3h-3zM904 258h3v3h-3zM908 258h3v3h-3zM896 262h3v3h-3zM912 262h3v3h-3zM896 266h3v3h-3zM912 266h3v3h-3zM896 270h3v3h-3zM912 270h3v3h-3zM900 274h3v3h-3zM904 274h3v3h-3zM908 274h3v3h-3zM944 250h3v3h-3zM948 250h3v3h-3zM952 250h3v3h-3zM956 250h3v3h-3zM960 250h3v3h-3zM956 254h3v3h-3zM952 258h3v3h-3zM956 262h3v3h-3zM960 266h3v3h-3zM944 270h3v3h-3zM960 270h3v3h-3zM948 274h3v3h-3zM952 274h3v3h-3zM956 274h3v3h-3zM972 250h3v3h-3zM976 250h3v3h-3zM980 250h3v3h-3zM968 254h3v3h-3zM984 254h3v3h-3zM968 258h3v3h-3zM980 258h3v3h-3zM984 258h3v3h-3zM968 262h3v3h-3zM976 262h3v3h-3zM984 262h3v3h-3zM968 266h3v3h-3zM972 266h3v3h-3zM984 266h3v3h-3zM968 270h3v3h-3zM984 270h3v3h-3zM972 274h3v3h-3zM976 274h3v3h-3zM980 274h3v3h-3zM996 250h3v3h-3zM1000 250h3v3h-3zM1004 250h3v3h-3zM992 254h3v3h-3zM1008 254h3v3h-3zM992 258h3v3h-3zM1004 258h3v3h-3zM1008 258h3v3h-3zM992 262h3v3h-3zM1000 262h3v3h-3zM1008 262h3v3h-3zM992 266h3v3h-3zM996 266h3v3h-3zM1008 266h3v3h-3zM992 270h3v3h-3zM1008 270h3v3h-3zM996 274h3v3h-3zM1000 274h3v3h-3zM1004 274h3v3h-3zM1040 250h3v3h-3zM1040 254h3v3h-3zM1040 258h3v3h-3zM1052 258h3v3h-3zM1040 262h3v3h-3zM1048 262h3v3h-3zM1040 266h3v3h-3zM1044 266h3v3h-3zM1040 270h3v3h-3zM1048 270h3v3h-3zM1040 274h3v3h-3zM1052 274h3v3h-3zM1068 258h3v3h-3zM1072 258h3v3h-3zM1076 258h3v3h-3zM1080 258h3v3h-3zM1064 262h3v3h-3zM1080 262h3v3h-3zM1068 266h3v3h-3zM1072 266h3v3h-3zM1076 266h3v3h-3zM1080 266h3v3h-3zM1080 270h3v3h-3zM1068 274h3v3h-3zM1072 274h3v3h-3zM1076 274h3v3h-3z"/>
  <defs><linearGradient id="gPin" x1="0" y1="0" x2="1" y2="0">
<stop offset="0" stop-color="#d5ddd9"/><stop offset=".3" stop-color="#fbfbfb"/><stop offset=".55" stop-color="#b8adad"/><stop offset=".75" stop-color="#302828"/><stop offset="1" stop-color="#8c9690"/></linearGradient>
<radialGradient id="gPinR" cx=".5" cy=".5" r=".5"><stop offset=".45" stop-color="#6a7a70" stop-opacity="0"/><stop offset="1" stop-color="#5a6a60" stop-opacity=".75"/></radialGradient></defs>
<g><ellipse cx="816.9" cy="338.5" rx="5" ry="6.8" fill="url(#gPin)"/><ellipse cx="816.9" cy="338.5" rx="5" ry="6.8" fill="url(#gPinR)"/><ellipse cx="829.2" cy="338.5" rx="5" ry="6.8" fill="url(#gPin)"/><ellipse cx="829.2" cy="338.5" rx="5" ry="6.8" fill="url(#gPinR)"/><ellipse cx="841.5" cy="338.5" rx="5" ry="6.8" fill="url(#gPin)"/><ellipse cx="841.5" cy="338.5" rx="5" ry="6.8" fill="url(#gPinR)"/><ellipse cx="853.8" cy="338.5" rx="5" ry="6.8" fill="url(#gPin)"/><ellipse cx="853.8" cy="338.5" rx="5" ry="6.8" fill="url(#gPinR)"/><ellipse cx="866.1" cy="338.5" rx="5" ry="6.8" fill="url(#gPin)"/><ellipse cx="866.1" cy="338.5" rx="5" ry="6.8" fill="url(#gPinR)"/><ellipse cx="878.4" cy="338.5" rx="5" ry="6.8" fill="url(#gPin)"/><ellipse cx="878.4" cy="338.5" rx="5" ry="6.8" fill="url(#gPinR)"/><ellipse cx="890.7" cy="338.5" rx="5" ry="6.8" fill="url(#gPin)"/><ellipse cx="890.7" cy="338.5" rx="5" ry="6.8" fill="url(#gPinR)"/><ellipse cx="903.0" cy="338.5" rx="5" ry="6.8" fill="url(#gPin)"/><ellipse cx="903.0" cy="338.5" rx="5" ry="6.8" fill="url(#gPinR)"/><ellipse cx="915.3" cy="338.5" rx="5" ry="6.8" fill="url(#gPin)"/><ellipse cx="915.3" cy="338.5" rx="5" ry="6.8" fill="url(#gPinR)"/><ellipse cx="927.6" cy="338.5" rx="5" ry="6.8" fill="url(#gPin)"/><ellipse cx="927.6" cy="338.5" rx="5" ry="6.8" fill="url(#gPinR)"/><ellipse cx="939.9" cy="338.5" rx="5" ry="6.8" fill="url(#gPin)"/><ellipse cx="939.9" cy="338.5" rx="5" ry="6.8" fill="url(#gPinR)"/><ellipse cx="952.2" cy="338.5" rx="5" ry="6.8" fill="url(#gPin)"/><ellipse cx="952.2" cy="338.5" rx="5" ry="6.8" fill="url(#gPinR)"/><ellipse cx="964.5" cy="338.5" rx="5" ry="6.8" fill="url(#gPin)"/><ellipse cx="964.5" cy="338.5" rx="5" ry="6.8" fill="url(#gPinR)"/><ellipse cx="976.8" cy="338.5" rx="5" ry="6.8" fill="url(#gPin)"/><ellipse cx="976.8" cy="338.5" rx="5" ry="6.8" fill="url(#gPinR)"/></g>
  <g fill="#fff" stroke="#111" stroke-width="2.8">
    <circle cx="770" cy="167.3" r="9.9"/>
    <circle cx="1209.2" cy="167.3" r="9.9"/>
    <circle cx="770" cy="332.7" r="9.9"/>
    <circle cx="1209.2" cy="332.7" r="9.9"/>
  </g>
</svg>
</body></html>
